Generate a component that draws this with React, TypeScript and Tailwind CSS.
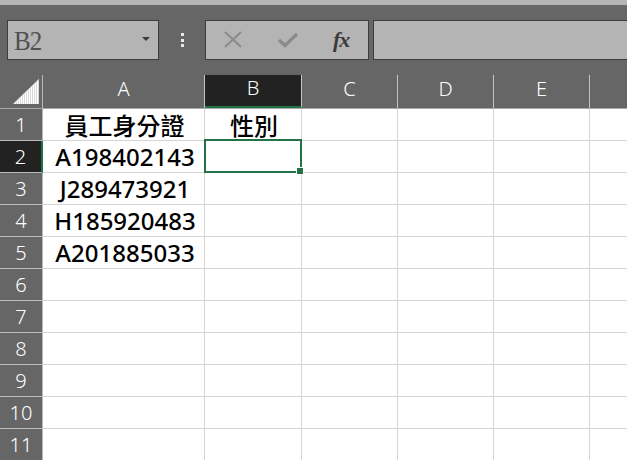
import React from "react";

const cols = [
  { key: "A", w: "w-[162px]" },
  { key: "B", w: "w-[97px]" },
  { key: "C", w: "w-[96px]" },
  { key: "D", w: "w-[96px]" },
  { key: "E", w: "w-[96px]" },
  { key: "F", w: "w-[60px]" },
];

const data: Record<number, string[]> = {
  1: ["員工身分證", "性別"],
  2: ["A198402143", ""],
  3: ["J289473921", ""],
  4: ["H185920483", ""],
  5: ["A201885033", ""],
};

function Corner() {
  return (
    <svg width="43" height="33" viewBox="0 0 43 33" className="block">
      <defs>
        <clipPath id="tri">
          <polygon points="13,29 39,29 39,4" />
        </clipPath>
      </defs>
      <polygon points="13,29 39,29 39,4" fill="#ffffff" />
      <g clipPath="url(#tri)" stroke="#c8c8c8" strokeWidth="0.7">
        {Array.from({ length: 14 }).map((_, i) => (
          <line key={i} x1={14.5 + i * 2} y1="0" x2={14.5 + i * 2} y2="33" />
        ))}
      </g>
    </svg>
  );
}

export default function App() {
  const rows = Array.from({ length: 11 }, (_, i) => i + 1);
  return (
    <div className="w-[627px] h-[460px] overflow-hidden bg-[#666666] font-['Noto_Sans','Noto_Sans_CJK_TC',sans-serif]">
      <div className="h-[5px] bg-[#b5b5b5]" />
      {/* toolbar */}
      <div className="h-[70px] flex items-start pt-[15px] pl-[7px] whitespace-nowrap">
        <div className="w-[152px] h-[40px] shrink-0 bg-[#b4b4b4] border border-[#3c3c3c] flex items-center justify-between pl-[6px] pr-[8px]">
          <span className="font-['Liberation_Serif',serif] text-[25px] leading-none text-[#505050] tracking-[-1px] scale-y-110">
            B2
          </span>
          <svg width="8" height="4" viewBox="0 0 8 4" className="mt-[-2px]">
            <polygon points="0,0 8,0 4,4" fill="#3a3a3a" />
          </svg>
        </div>
        <div className="w-[46px] h-[40px] shrink-0 flex flex-col items-center justify-center gap-[2.5px] pl-[1px]">
          <div className="w-[3px] h-[3px] bg-[#e8e8e8]" />
          <div className="w-[3px] h-[3px] bg-[#e8e8e8]" />
          <div className="w-[3px] h-[3px] bg-[#e8e8e8]" />
        </div>
        <div className="w-[164px] h-[40px] shrink-0 bg-[#b4b4b4] border border-[#3c3c3c] flex items-center">
          <svg width="20" height="20" viewBox="0 0 20 20" className="ml-[17px]">
            <path d="M2 2 L18 17 M18 2 L2 17" stroke="#8a8a8a" strokeWidth="2" fill="none" />
          </svg>
          <svg width="22" height="16" viewBox="0 0 22 16" className="ml-[34px]">
            <path d="M2 8 L8 13.5 L20 2" stroke="#8a8a8a" strokeWidth="3.2" fill="none" />
          </svg>
          <span className="ml-[34px] font-['Liberation_Serif',serif] italic font-bold text-[22px] leading-none text-[#3a3a3a] tracking-[-1px]">
            fx
          </span>
        </div>
        <div className="ml-[4px] w-[300px] h-[40px] shrink-0 bg-[#b4b4b4] border border-[#3c3c3c]" />
      </div>
      {/* column header */}
      <div className="flex h-[34px] border-b border-[#a8a8a8]">
        <div className="w-[43px] shrink-0 border-r border-[#b8b8b8]">
          <Corner />
        </div>
        {cols.map((c) => (
          <div
            key={c.key}
            className={`${c.w} shrink-0 border-r border-[#c4c4c4] flex items-center justify-center pb-[5px] text-[20px] font-light text-white leading-none ${
              c.key === "B" ? "bg-[#222222] border-b-2 border-b-[#217346]" : ""
            }`}
          >
            {c.key === "F" ? "" : c.key}
          </div>
        ))}
      </div>
      {/* body */}
      {rows.map((r) => (
        <div key={r} className="flex h-[32px]">
          <div
            className={`w-[43px] shrink-0 flex items-center justify-center text-[20px] font-light text-white leading-none border-b border-[#bcbcbc] ${
              r === 2 ? "bg-[#222222] border-r-2 border-r-[#217346]" : "bg-[#666666] border-r border-r-[#b8b8b8]"
            }`}
          >
            {r}
          </div>
          {cols.map((c, ci) => (
            <div
              key={c.key}
              className={`${c.w} shrink-0 relative bg-white border-r border-b border-[#d4d4d4] flex items-center justify-center text-[24px] font-medium leading-none text-black`}
            >
              <span className={r === 1 ? "pt-[3px] pl-[2px]" : "pl-[3px]"}>{data[r]?.[ci] ?? ""}</span>
              {r === 2 && c.key === "B" && (
                <div className="absolute left-[-1px] top-[-2px] w-[98px] h-[34px] border-2 border-[#217346] z-10">
                  <div className="absolute right-[-4px] bottom-[-4px] w-[8px] h-[8px] bg-white" />
                  <div className="absolute right-[-3px] bottom-[-3px] w-[6px] h-[6px] bg-[#217346]" />
                </div>
              )}
            </div>
          ))}
        </div>
      ))}
    </div>
  );
}
